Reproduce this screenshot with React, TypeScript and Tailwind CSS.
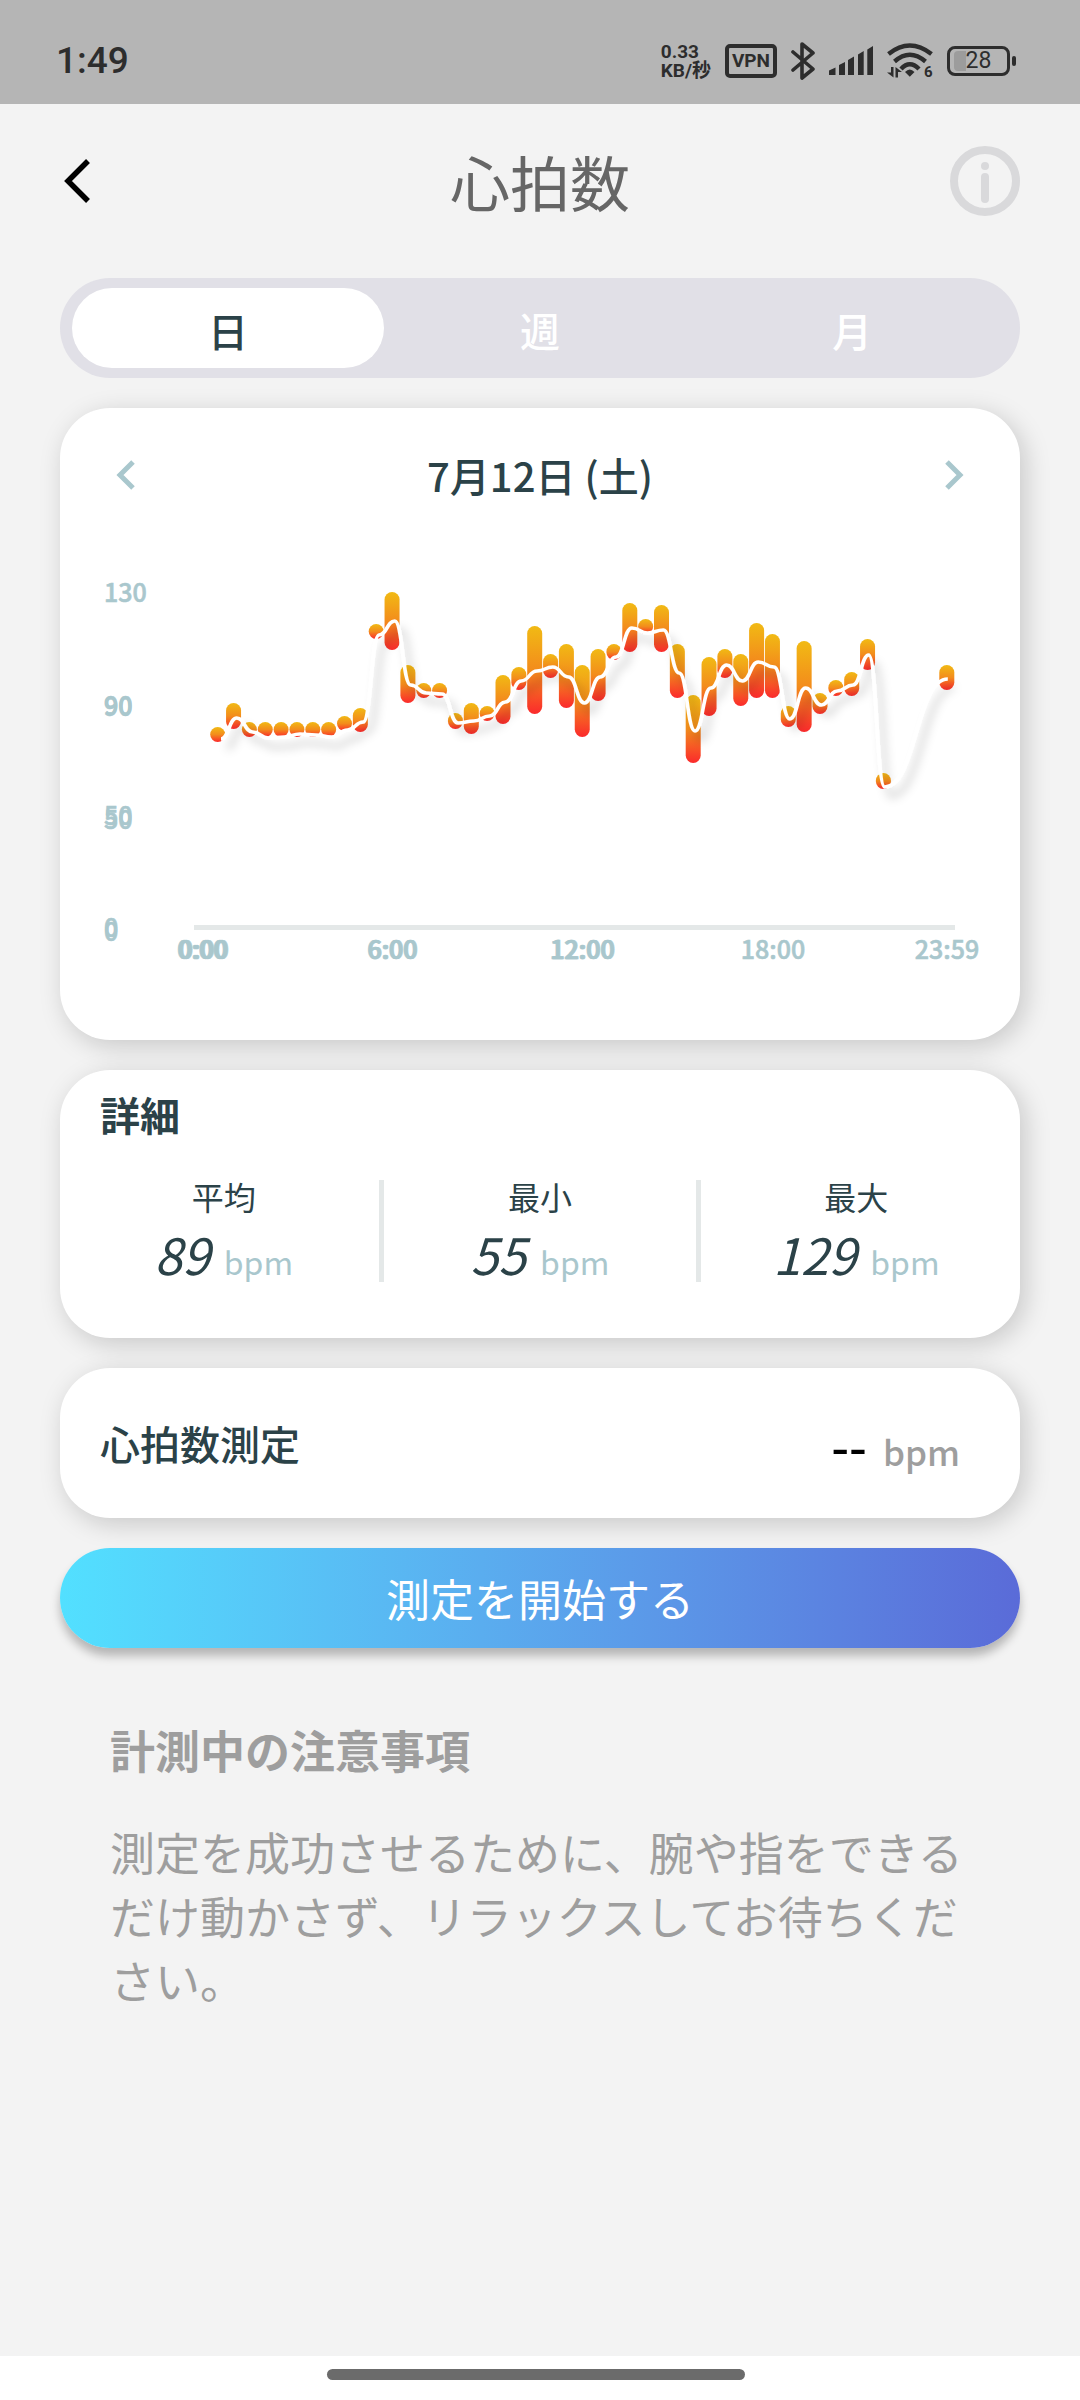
import { useState } from "react";

const TABS = ["日", "週", "月"];

const STATS = [
  { label: "平均", value: 89 },
  { label: "最小", value: 55 },
  { label: "最大", value: 129 },
];

// One entry per half hour slot: [slot, bar top, bar bottom, average]
const SAMPLES = [
  [0, 187, 202, 199],
  [1, 163, 189, 178],
  [2, 182, 197, 192],
  [3, 182, 197, 198],
  [4, 182, 197, 197],
  [5, 182, 197, 194],
  [6, 182, 197, 195],
  [7, 182, 197, 197],
  [8, 176, 191, 190],
  [9, 168, 192, 182],
  [10, 84, 99, 95],
  [11, 52, 110, 81],
  [12, 125, 163, 145],
  [13, 143, 158, 153],
  [14, 143, 158, 154],
  [15, 173, 189, 183],
  [16, 163, 194, 181],
  [17, 166, 181, 176],
  [18, 135, 184, 162],
  [19, 127, 150, 141],
  [20, 86, 174, 131],
  [21, 114, 138, 127],
  [22, 104, 168, 137],
  [23, 125, 197, 163],
  [24, 109, 161, 137],
  [25, 104, 120, 117],
  [26, 63, 112, 88],
  [27, 79, 94, 93],
  [28, 65, 112, 90],
  [29, 104, 158, 133],
  [30, 155, 223, 191],
  [31, 117, 176, 148],
  [32, 109, 138, 125],
  [33, 114, 166, 141],
  [34, 83, 158, 122],
  [35, 94, 158, 127],
  [36, 166, 187, 179],
  [37, 101, 192, 148],
  [38, 153, 174, 165],
  [39, 140, 156, 151],
  [40, 132, 156, 145],
  [41, 99, 130, 115],
  [42, 233, 249, 247],
  [46, 125, 150, 139],
];

const Y_LABELS = [
  { text: "130", y: 62 },
  { text: "90", y: 175 },
  { text: "90", y: 176 },
  { text: "50", y: 285 },
  { text: "50", y: 289 },
  { text: "0", y: 397 },
  { text: "0", y: 401 },
];

const X_LABELS = [
  { text: "0:00", x: 142 },
  { text: "0:00", x: 144 },
  { text: "6:00", x: 332 },
  { text: "6:00", x: 333 },
  { text: "12:00", x: 522 },
  { text: "12:00", x: 523 },
  { text: "18:00", x: 713 },
  { text: "23:59", x: 887 },
];

// Every segment leaves and enters its points horizontally
function smoothPath(points: number[][]) {
  let d = `M${points[0][0]} ${points[0][1]}`;
  for (let i = 1; i < points.length; i++) {
    const [x0, y0] = points[i - 1];
    const [x1, y1] = points[i];
    const mid = (x0 + x1) / 2;
    d += ` C${mid} ${y0} ${mid} ${y1} ${x1} ${y1}`;
  }
  return d;
}

function HeartChart() {
  const line = smoothPath(SAMPLES.map(([slot, , , avg]) => [161 + slot * 15.8, avg]));

  return (
    <svg viewBox="0 0 960 430" className="block w-full" role="img" aria-label="心拍数">
      <defs>
        <linearGradient id="bar" x1="0" y1="0" x2="0" y2="1">
          <stop offset="0" stopColor="#f1ba14" />
          <stop offset="0.5" stopColor="#f38c1c" />
          <stop offset="1" stopColor="#fb2a2c" />
        </linearGradient>
        <filter id="lineShadow" x="-5%" y="-20%" width="110%" height="150%">
          <feDropShadow dx="6" dy="9" stdDeviation="5" floodColor="#000" floodOpacity="0.22" />
        </filter>
      </defs>
      <rect x="134" y="385" width="761" height="5" fill="#e4e8e8" />
      {SAMPLES.map(([slot, top, bottom]) => (
        <rect
          key={slot}
          x={150.2 + slot * 15.85}
          y={top}
          width="15"
          height={bottom - top}
          rx="7.5"
          fill="url(#bar)"
        />
      ))}
      <path d={line} fill="none" stroke="#fff" strokeWidth="3.6" filter="url(#lineShadow)" />
      <g fill="#a9c7cd" stroke="#a9c7cd" strokeWidth="0.6" fontSize="25" fontWeight="500">
        {Y_LABELS.map(({ text, y }) => (
          <text key={y} x="44" y={y}>
            {text}
          </text>
        ))}
        {X_LABELS.map(({ text, x }) => (
          <text key={x} x={x} y="419" textAnchor="middle">
            {text}
          </text>
        ))}
      </g>
    </svg>
  );
}

function StatusBar() {
  return (
    <div className="flex h-[104px] items-center justify-between bg-[#b5b5b5] pt-[18px] pr-16 pl-14 font-[Roboto] text-[#2d2d2d]">
      <span className="text-[37px] leading-10 font-medium">1:49</span>
      <div className="flex items-center gap-3.5">
        <div className="font-[Roboto,'Noto_Sans_CJK_JP',sans-serif] text-[19px] leading-[19px] font-bold">
          <div>0.33</div>
          <div>KB/秒</div>
        </div>
        <div className="flex h-[34px] w-[52px] items-center justify-center rounded-[5px] border-4 border-[#2d2d2d] text-[19px] font-bold">
          VPN
        </div>
        <svg width="24" height="38" viewBox="0 0 24 38" fill="none" stroke="currentColor" strokeWidth="3.6" strokeLinejoin="round" strokeLinecap="round">
          <path d="M2 10 22 27 11 36V2l11 9L2 28" />
        </svg>
        <svg width="44" height="30" viewBox="0 0 44 30" fill="currentColor">
          <path d="M0 24.500 6.500 21.500V29H0zM10 19l6-3v13h-6zM19 14l6-3.500V29h-6zM29 8.500l5.700-3.500v24H29zM38.300 3.500 44 0v29h-5.700z" />
        </svg>
        <svg width="46" height="36" viewBox="0 0 46 36" className="overflow-visible">
          <g fill="none" stroke="currentColor" strokeWidth="4.4">
            <path d="M1.500 11Q22.700-6 44.500 11" />
            <path d="M7.500 18.500Q22.700 5 38.500 18.500" />
            <path d="M14 26Q22.700 16.500 32 26" />
          </g>
          <path d="M18 29q4.700-5 9.500 0l-4.700 4.800zM4 24h2.500v10.500L0 29.500h4zM8.500 34.500V24l6.500 5h-4v5.500z" fill="currentColor" />
          <text x="37" y="34" fontSize="15" fontWeight="700" fill="currentColor">
            6
          </text>
        </svg>
        <div className="flex items-center gap-0.5">
          <div className="relative flex h-[30px] w-[63px] items-center justify-center rounded-lg border-3 border-[#2d2d2d]">
            <div className="absolute top-0.5 left-1 h-5 w-3 rounded-l-[4px] bg-[#9c9c9c]" />
            <span className="relative text-[23px] leading-6">28</span>
          </div>
          <div className="h-2.5 w-1 rounded-sm bg-[#2d2d2d]" />
        </div>
      </div>
    </div>
  );
}

function Chevron({ flip = false }: { flip?: boolean }) {
  return (
    <svg width="20" height="30" viewBox="0 0 20 30" fill="none" stroke="#a9c7cd" strokeWidth="5">
      <path d={flip ? "M3 2l13 13L3 28" : "M17 2 4 15l13 13"} />
    </svg>
  );
}

export default function App() {
  const [tab, setTab] = useState(0);

  return (
    <div className="flex min-h-screen flex-col bg-[#f3f3f3] font-['Noto_Sans_CJK_JP',sans-serif] text-[#2b4248]" lang="ja">
      <StatusBar />

      <header className="flex h-[154px] items-center justify-between px-[60px]">
        <button aria-label="戻る" className="w-[70px]">
          <svg width="32" height="46" viewBox="0 0 32 46" fill="none" stroke="#000" strokeWidth="5.5">
            <path d="M28 3 8 23l20 20" />
          </svg>
        </button>
        <h1 className="text-[60px] leading-[72px] text-[#666]">心拍数</h1>
        <button aria-label="情報">
          <svg width="70" height="70" viewBox="0 0 70 70" fill="none" stroke="#d9d9db" strokeWidth="8" strokeLinecap="round">
            <circle cx="35" cy="35" r="31" />
            <path d="M35 20v.1M35 31v22" />
          </svg>
        </button>
      </header>

      <main className="flex flex-col gap-[30px] px-[60px] pt-5">
        <div role="tablist" className="grid h-[100px] grid-cols-3 rounded-full bg-[#e1e0e7] px-3 py-2.5">
          {TABS.map((name, i) => (
            <button
              key={name}
              role="tab"
              aria-selected={tab === i}
              onClick={() => setTab(i)}
              className={
                tab === i
                  ? "rounded-full bg-white pt-1 text-[40px] leading-none font-medium"
                  : "rounded-full pt-1 text-[40px] leading-none font-medium text-white"
              }
            >
              {name}
            </button>
          ))}
        </div>

        <section className="rounded-[50px] bg-white pb-[70px] shadow-[5px_6px_26px_rgba(0,0,0,0.18)]">
          <div className="flex h-[132px] items-center justify-between px-14 pt-0.5">
            <button aria-label="前の日">
              <Chevron />
            </button>
            <h2 className="text-[40px] leading-[48px] font-medium">7月12日 (土)</h2>
            <button aria-label="次の日">
              <Chevron flip />
            </button>
          </div>
          <HeartChart />
        </section>

        <section className="rounded-[50px] bg-white px-2 pt-4 pb-14 shadow-[5px_6px_26px_rgba(0,0,0,0.18)]">
          <h2 className="px-8 text-[40px] leading-[56px] font-bold">詳細</h2>
          <div className="mt-[38px] flex divide-x-5 divide-[#e4e8e8]">
            {STATS.map(({ label, value }) => (
              <dl key={label} className="flex-1 text-center">
                <dt className="text-[32px] leading-8">{label}</dt>
                <dd className="flex items-baseline justify-center gap-3.5 pt-3">
                  <span className="text-[50px] leading-[58px] italic">{value}</span>
                  <span className="text-[32px] leading-8 text-[#a9c7cd]">bpm</span>
                </dd>
              </dl>
            ))}
          </div>
        </section>

        <section className="flex h-[150px] items-center justify-between rounded-[50px] bg-white pr-[60px] pl-10 shadow-[5px_6px_26px_rgba(0,0,0,0.18)]">
          <h2 className="text-[40px] leading-[56px] font-medium">心拍数測定</h2>
          <p className="flex items-baseline gap-4 pt-2 font-medium">
            <span className="text-[50px] leading-[56px] text-black">--</span>
            <span className="text-[35px] leading-[56px] text-[#9e9e9e]">bpm</span>
          </p>
        </section>

        <button className="h-[100px] rounded-full bg-linear-to-r from-[#52e0ff] to-[#5a6bd8] text-[44px] leading-none text-white shadow-[0_8px_10px_rgba(0,0,0,0.25)]">
          測定を開始する
        </button>

        <section className="px-[50px] pt-10 text-[#9e9e9e]">
          <h2 className="text-[45px] leading-16 font-bold">計測中の注意事項</h2>
          <p className="mt-[38px] text-[45px] leading-16">
            測定を成功させるために、腕や指をできるだけ動かさず、リラックスしてお待ちください。
          </p>
        </section>
      </main>

      <div className="mt-auto flex h-11 justify-center bg-white pt-[13px] pr-2">
        <div className="h-[11px] w-[418px] rounded-full bg-[#6b6b6b]" />
      </div>
    </div>
  );
}
